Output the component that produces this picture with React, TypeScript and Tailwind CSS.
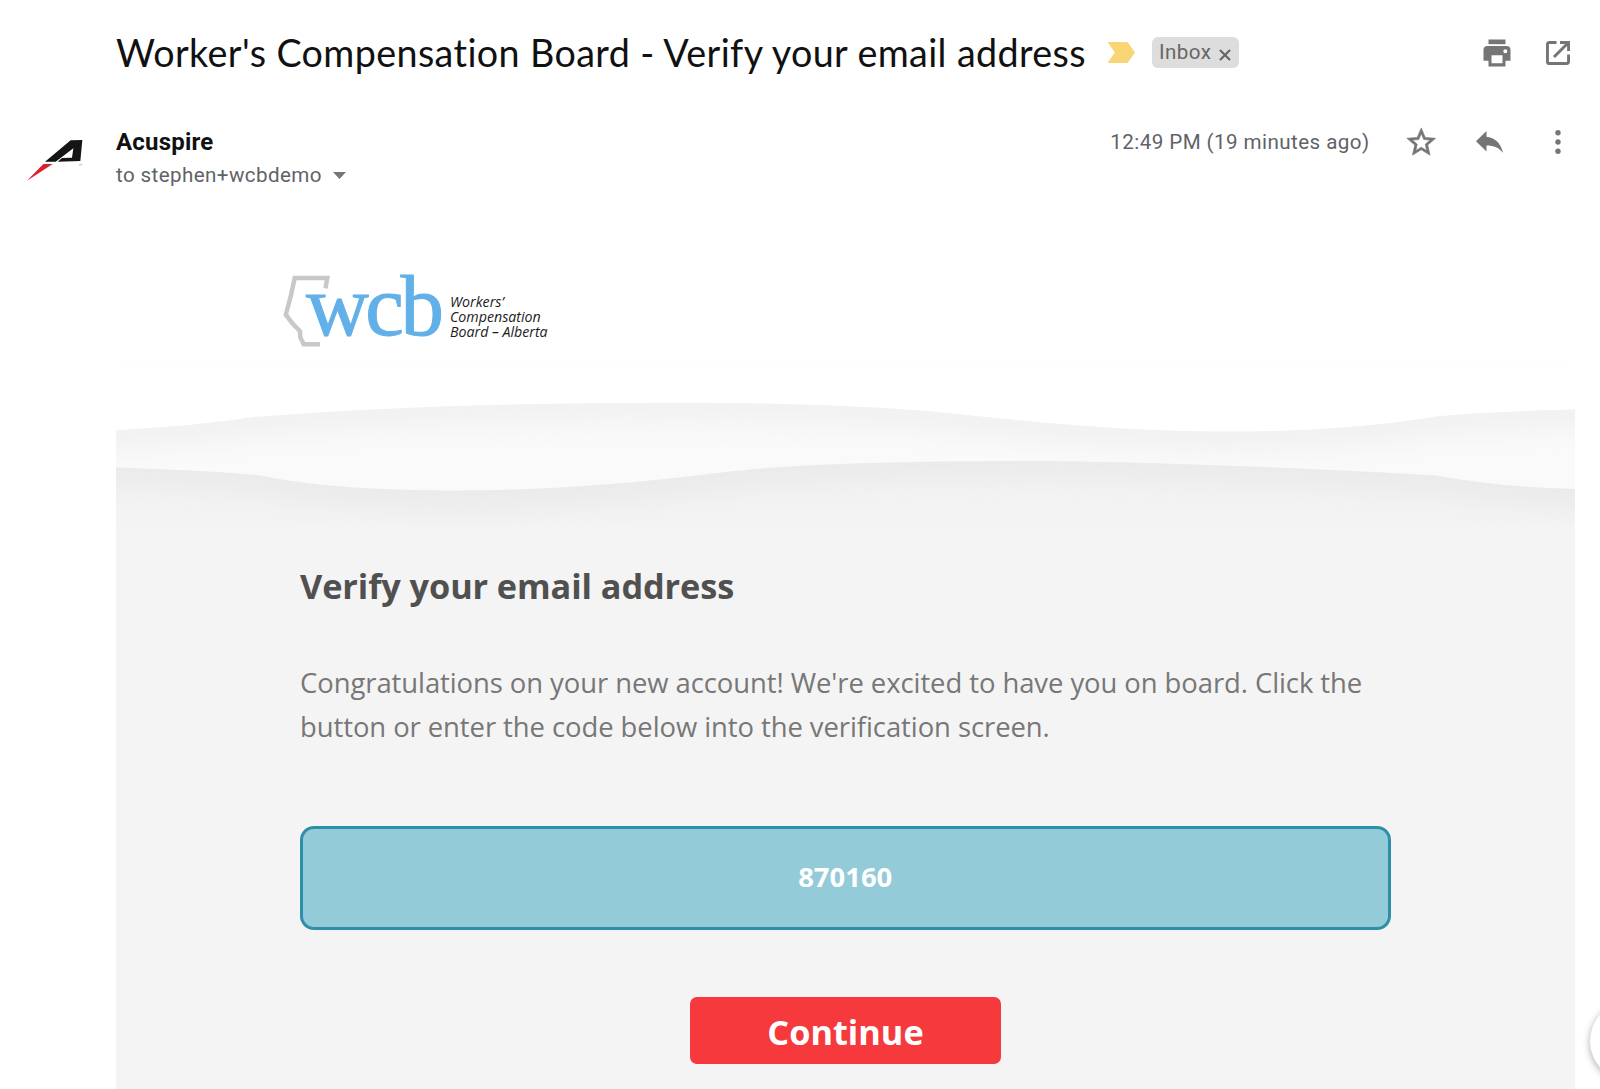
import type { ReactNode } from 'react';

const UPPER_EDGE =
  'M-60 68 C-30 67 0 67 0 65 C60 62 95 58 139 52 C240 44 380 38 520 38 C640 37 760 40 850 50 C920 57 1010 66.500 1112 66.500 C1200 66.500 1270 60 1320 51.500 C1370 47 1420 45.500 1459 44.500 L1520 43';
const LOWER_EDGE =
  'M-60 101 L0 102.500 C60 104.500 110 107 144 110.500 C190 120 250 125.500 345 125.500 C435 125.500 530 117 610 107 C690 98 800 96 932 96 C1060 97.500 1220 104.500 1320 110.500 C1365 118.500 1410 123 1459 124 L1520 125';

function IconButton({ label, children }: { label: string; children: ReactNode }) {
  return (
    <button aria-label={label} className="block text-[#757575]">
      {children}
    </button>
  );
}

function PrintIcon() {
  return (
    <svg className="block w-7 h-7" viewBox="0 0 28 28" fill="currentColor">
      <path d="M5.500 .5h17v4.700h-17z" />
      <path
        fillRule="evenodd"
        d="M4.500 7h19a4 4 0 0 1 4 4v10.700h-5v5.800h-17v-5.800h-5V11a4 4 0 0 1 4-4zM8.500 16.300v8h11v-8zM22.300 10.200a2 2 0 1 0 0 4 2 2 0 0 0 0-4z"
      />
    </svg>
  );
}

function OpenInNewIcon() {
  return (
    <svg className="block w-6 h-6" viewBox="0 0 24 24" fill="none" stroke="currentColor" strokeWidth="2.900">
      <path d="M10.500 1.450H3.400a2 2 0 0 0-1.950 2v17.150a2 2 0 0 0 2 1.950h17.150a2 2 0 0 0 1.950-2v-7.100" />
      <path d="M14 1.450h8.550V10M22 2 8 16" />
    </svg>
  );
}

function StarIcon() {
  return (
    <svg
      className="block w-[34.5px] h-[34.5px]"
      viewBox="0 0 24 24"
      fill="currentColor"
      stroke="currentColor"
      strokeWidth="0.400"
    >
      <path d="M22 9.240l-7.190-.620L12 2 9.190 8.630 2 9.240l5.460 4.730L5.820 21 12 17.270 18.180 21l-1.630-7.030L22 9.240zM12 15.400l-3.760 2.270 1-4.280-3.320-2.880 4.380-.380L12 6.100l1.710 4.040 4.380.380-3.320 2.880 1 4.280L12 15.400z" />
    </svg>
  );
}

function ReplyIcon() {
  return (
    <svg className="block w-[27px] h-[22px]" viewBox="3 5 18 15" preserveAspectRatio="none" fill="currentColor">
      <path d="M10 9V5l-7 7 7 7v-4.100c5 0 8.500 1.600 11 5.100-1-5-4-10-11-11z" />
    </svg>
  );
}

function MoreIcon() {
  return (
    <svg className="block w-1.5 h-6" viewBox="0 0 6 24" fill="currentColor">
      <circle cx="3" cy="2.700" r="2.700" />
      <circle cx="3" cy="12" r="2.700" />
      <circle cx="3" cy="21.300" r="2.700" />
    </svg>
  );
}

function Avatar() {
  return (
    <svg className="block w-[60px] h-[45px]" viewBox="45 50 180 135">
      <path fill="#151515" d="M105 124 182 60l35-1-6 63-68 2 13-11 30-1 4-28-53 40z" />
      <path fill="#d9202b" d="M100 131h28L51 181z" />
      <path fill="#bbb" d="M207 132h10v3h-10z" />
    </svg>
  );
}

function WcbLogo() {
  return (
    <div className="flex">
      <svg className="block w-[168px] h-[90px] overflow-visible" viewBox="0 0 168 90">
        <path
          d="M43.500 29.300 45.300 19H12.700L9 36 3.800 55.700l4.500 6 2.700 3.300 7 7.300.3 6 3.300 6.900H38"
          fill="none"
          stroke="#c6c8ca"
          strokeWidth="4.500"
        />
        <text
          x="24"
          y="76"
          className="font-['Liberation_Serif',serif] text-[87px] tracking-[-3.5px]"
          fill="#62b0e8"
          stroke="#62b0e8"
          strokeWidth="1"
        >
          wcb
        </text>
      </svg>
      <p className="pt-[34.5px] font-['Open_Sans',sans-serif] italic text-[14.2px] leading-[15px] text-[#1c1c1c]">
        Workers’
        <br />
        Compensation
        <br />
        Board – Alberta
      </p>
    </div>
  );
}

function Waves() {
  return (
    <svg className="block w-full h-[162px]" viewBox="0 0 1459 162" preserveAspectRatio="none">
      <defs>
        <clipPath id="upper">
          <path d={`${UPPER_EDGE} V162 H-60 Z`} />
        </clipPath>
        <clipPath id="lower">
          <path d={`${LOWER_EDGE} V162 H-60 Z`} />
        </clipPath>
        <filter id="soft" x="-10%" y="-200%" width="120%" height="500%">
          <feGaussianBlur stdDeviation="16" />
        </filter>
      </defs>
      <g clipPath="url(#upper)">
        <path d="M0 0h1459v162H0z" fill="#fafafa" />
        <path d={UPPER_EDGE} fill="none" stroke="#ebebeb" strokeWidth="24" filter="url(#soft)" />
      </g>
      <g clipPath="url(#lower)">
        <path d="M0 0h1459v162H0z" fill="#f3f3f3" />
        <path d={LOWER_EDGE} fill="none" stroke="#e4e4e4" strokeWidth="22" filter="url(#soft)" />
      </g>
    </svg>
  );
}

function EmailBody() {
  return (
    <section className="w-[1459px] ml-[116px] mt-16 font-['Open_Sans',sans-serif]">
      <div className="h-[106px] pl-[166px] border-b border-[#fdfdfd]">
        <WcbLogo />
      </div>
      <Waves />
      <div className="h-[563px] px-[184px] bg-[#f4f4f4]">
        <h2 className="pt-9 text-[34.3px] leading-[46px] font-bold tracking-[-0.1px] text-[#505050]">
          Verify your email address
        </h2>
        <p className="mt-[52px] text-[27.44px] leading-[44px] tracking-[-0.07px] text-[#777]">
          Congratulations on your new account! We're excited to have you on board. Click the
          <br />
          button or enter the code below into the verification screen.
        </p>
        <div className="flex items-center justify-center w-[1090.5px] h-[104px] pb-0.5 mt-[77px] rounded-[14px] border-[3px] border-[#2e8fa9] bg-[#94cbd9] text-[27.44px] font-bold text-white">
          870160
        </div>
        <button className="flex items-center justify-center w-[311px] h-[67px] pt-0.5 mx-auto mt-[67px] rounded-[7px] bg-[#f5393c] text-[34.3px] font-bold text-white">
          Continue
        </button>
      </div>
    </section>
  );
}

export default function App() {
  return (
    <main className="relative w-[1600px] h-[1089px] overflow-hidden bg-white font-['Roboto',sans-serif]">
      <header className="flex items-center h-[106px] pl-[116px] pr-[30px]">
        <h1 className="w-[971px] font-['Lato',sans-serif] text-[37.7px] leading-[48px] tracking-[0.38px] whitespace-nowrap text-[#111]">
          Worker's Compensation Board - Verify your email address
        </h1>
        <svg className="block ml-5 mb-px w-7 h-[21px]" viewBox="0 0 28 21">
          <path d="M.5 0h19a2 2 0 0 1 1.600.8L28 10.500l-6.900 9.700a2 2 0 0 1-1.600.8H.5l7.300-10.500z" fill="#f8d575" />
        </svg>
        <div className="flex items-center ml-[17px] mb-px w-[87px] h-[31px] pl-[7px] rounded-md bg-[#ddd] text-[20.6px] text-[#666]">
          <span className="w-[60px] tracking-[0.4px]">Inbox</span>
          <svg className="block w-3 h-3 mt-1" viewBox="0 0 12 12" stroke="#666" strokeWidth="2.200">
            <path d="M1 1l10 10M11 1 1 11" />
          </svg>
        </div>
        <div className="flex items-center gap-[35px] ml-auto">
          <IconButton label="Print">
            <PrintIcon />
          </IconButton>
          <IconButton label="Open in new window">
            <OpenInNewIcon />
          </IconButton>
        </div>
      </header>

      <div className="flex h-[89px] pt-[22px] pr-[39px]">
        <div className="w-[116px] pl-[25px] pt-[9px]">
          <Avatar />
        </div>
        <div>
          <h3 className="text-[24px] leading-7 font-bold tracking-[0.2px] text-[#111]">Acuspire</h3>
          <p className="flex items-center mt-[3px] text-[20.6px] leading-8 tracking-[0.4px] text-[#5f6368]">
            to stephen+wcbdemo
            <svg className="block ml-[11px] w-[13px] h-[7px]" viewBox="0 0 13 7">
              <path d="M0 0h13L6.500 7z" fill="#757575" />
            </svg>
          </p>
        </div>
        <div className="flex items-center h-7 ml-auto text-[20.6px] text-[#5f6368]">
          <span className="tracking-[0.42px]">12:49 PM (19 minutes ago)</span>
          <div className="flex items-center ml-[34px]">
            <IconButton label="Star">
              <StarIcon />
            </IconButton>
            <div className="ml-[38px] mr-[52px]">
              <IconButton label="Reply">
                <ReplyIcon />
              </IconButton>
            </div>
            <IconButton label="More">
              <MoreIcon />
            </IconButton>
          </div>
        </div>
      </div>

      <EmailBody />

      <button
        aria-label="Side panel"
        className="absolute left-[1590px] top-[1001px] w-20 h-20 rounded-full bg-white shadow-[0_2px_6px_1px_rgba(60,64,67,0.35)]"
      />
    </main>
  );
}
